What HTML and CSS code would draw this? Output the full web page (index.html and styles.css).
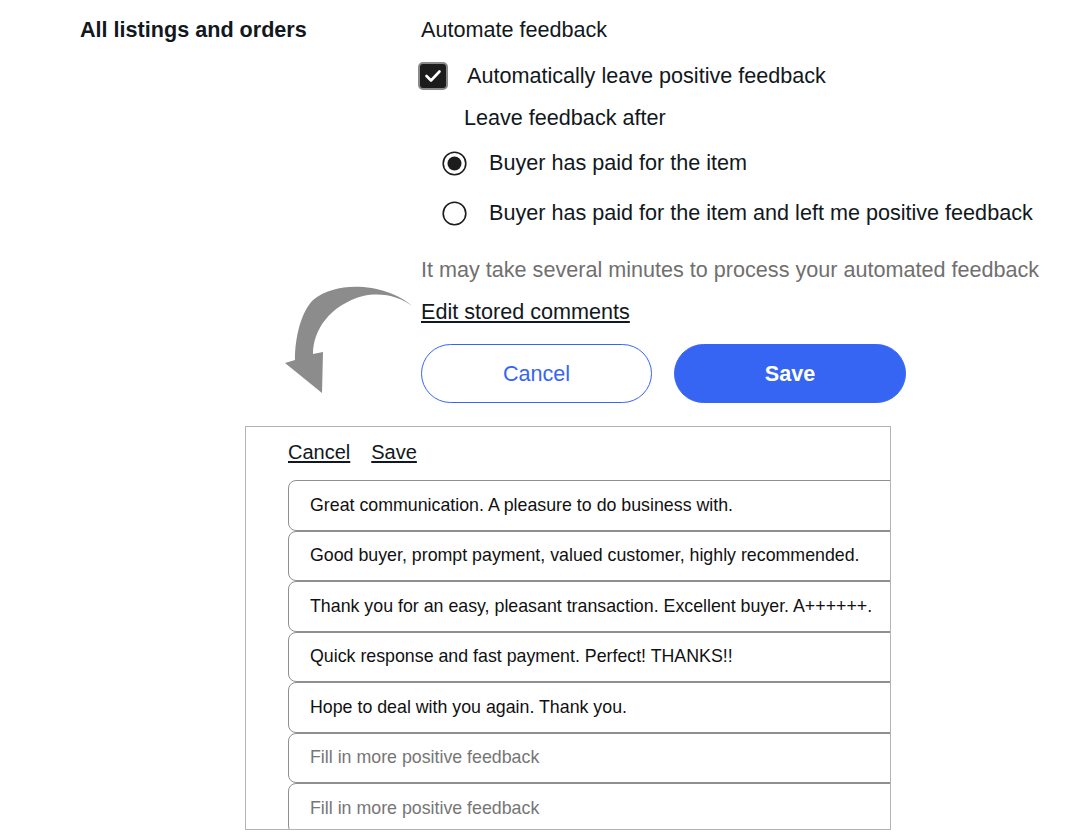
FILE: index.html
```html
<!DOCTYPE html>
<html lang="en">
<head>
<meta charset="utf-8">
<title>Automate feedback</title>
<link rel="stylesheet" href="styles.css">
</head>
<body>
<div class="page">
  <div class="settings">
    <div class="label-col">All listings and orders</div>
    <div class="form-col">
      <div class="title">Automate feedback</div>
      <div class="check-row">
        <svg class="checkbox" width="30" height="28" viewBox="0 0 30 28" aria-hidden="true">
          <rect x="1" y="1" width="28" height="26" rx="4" fill="#1c1c1c" stroke="#8a8a8a" stroke-width="2"/>
          <path d="M8.5 14 L13 18.5 L21.5 9.5" fill="none" stroke="#fff" stroke-width="2.6" stroke-linecap="round" stroke-linejoin="round"/>
        </svg>
        <span>Automatically leave positive feedback</span>
      </div>
      <div class="sub">Leave feedback after</div>
      <div class="radio-row first">
        <svg width="25" height="25" viewBox="0 0 25 25" aria-hidden="true">
          <circle cx="12.5" cy="12.5" r="11.3" fill="#fff" stroke="#1c1c1c" stroke-width="1.6"/>
          <circle cx="12.5" cy="12.5" r="7" fill="#1c1c1c"/>
        </svg>
        <span>Buyer has paid for the item</span>
      </div>
      <div class="radio-row">
        <svg width="25" height="25" viewBox="0 0 25 25" aria-hidden="true">
          <circle cx="12.5" cy="12.5" r="11.3" fill="#fff" stroke="#1c1c1c" stroke-width="1.6"/>
        </svg>
        <span>Buyer has paid for the item and left me positive feedback</span>
      </div>
      <div class="note">It may take several minutes to process your automated feedback</div>
      <div class="edit"><a class="link" href="#">Edit stored comments</a></div>
      <div class="buttons">
        <button class="btn btn-secondary" type="button">Cancel</button>
        <button class="btn btn-primary" type="button">Save</button>
      </div>
    </div>
  </div>

  <svg class="arrow" width="140" height="120" viewBox="0 0 140 120" aria-hidden="true">
    <path d="M132 26 C110 6, 60 -2, 33 20 C22 31, 15 55, 15 80 L5 83 L42 113 L43 72 L33 74 C33 50, 50 25, 83 16 C103 12, 120 17, 132 26 Z" fill="#8c8c8c"/>
  </svg>

  <div class="panel">
    <div class="panel-links">
      <a class="link" href="#">Cancel</a>
      <a class="link" href="#">Save</a>
    </div>
    <div class="comments">
      <div class="comment">Great communication. A pleasure to do business with.</div>
      <div class="comment">Good buyer, prompt payment, valued customer, highly recommended.</div>
      <div class="comment">Thank you for an easy, pleasant transaction. Excellent buyer. A++++++.</div>
      <div class="comment">Quick response and fast payment. Perfect! THANKS!!</div>
      <div class="comment">Hope to deal with you again. Thank you.</div>
      <div class="comment placeholder">Fill in more positive feedback</div>
      <div class="comment placeholder">Fill in more positive feedback</div>
    </div>
  </div>
</div>
</body>
</html>
```

FILE: styles.css
```css
* {
  box-sizing: border-box;
}

html, body {
  margin: 0;
  padding: 0;
  background: #fff;
}

body {
  font-family: "Liberation Sans", Arial, sans-serif;
  font-size: 21.6px;
  color: #111820;
}

.page {
  position: relative;
  width: 1088px;
  height: 836px;
  overflow: hidden;
}

.settings {
  display: flex;
  padding-top: 18px;
}

.label-col {
  flex: none;
  width: 421px;
  padding-left: 80px;
  font-weight: bold;
  line-height: 24px;
}

.form-col {
  display: flex;
  flex-direction: column;
  line-height: 24px;
}

.title {
  height: 24px;
}

.check-row {
  display: flex;
  align-items: center;
  gap: 19px;
  height: 30px;
  margin-top: 19px;
  margin-left: -3px;
}

.checkbox {
  display: block;
}

.sub {
  margin-top: 15px;
  padding-left: 43px;
}

.radio-row {
  display: flex;
  align-items: center;
  gap: 22px;
  height: 30px;
  padding-left: 21px;
  margin-top: 20px;
}

.radio-row.first {
  margin-top: 18px;
}

.radio-row svg {
  display: block;
}

.note {
  margin-top: 30px;
  color: #707070;
  white-space: nowrap;
}

.edit {
  margin-top: 18px;
}

.link {
  color: #111820;
  text-decoration: underline;
  text-underline-offset: 2px;
}

.buttons {
  display: flex;
  gap: 22px;
  margin-top: 20px;
}

.btn {
  height: 59px;
  border-radius: 30px;
  font-family: "Liberation Sans", Arial, sans-serif;
  font-size: 21.6px;
  cursor: pointer;
}

.btn-secondary {
  width: 231px;
  background: #fff;
  border: 1px solid #3665f3;
  color: #3665f3;
}

.btn-primary {
  width: 232px;
  background: #3665f3;
  border: 1px solid #3665f3;
  color: #fff;
  font-weight: bold;
}

.arrow {
  position: absolute;
  left: 280px;
  top: 280px;
}

.panel {
  margin-top: 23px;
  margin-left: 245px;
  width: 646px;
  height: 404px;
  border: 1px solid #b4b4b4;
  overflow: hidden;
  padding: 13px 0 0 42px;
}

.panel-links {
  display: flex;
  gap: 21px;
  font-size: 20px;
  line-height: 24px;
}

.comments {
  margin-top: 16px;
  width: 700px;
}

.comment {
  height: 50.5px;
  border: 1px solid #8f8f8f;
  border-radius: 8px;
  padding-left: 21px;
  display: flex;
  align-items: center;
  font-size: 17.8px;
  color: #111;
  white-space: nowrap;
}

.comment.placeholder {
  color: #767676;
}
```
